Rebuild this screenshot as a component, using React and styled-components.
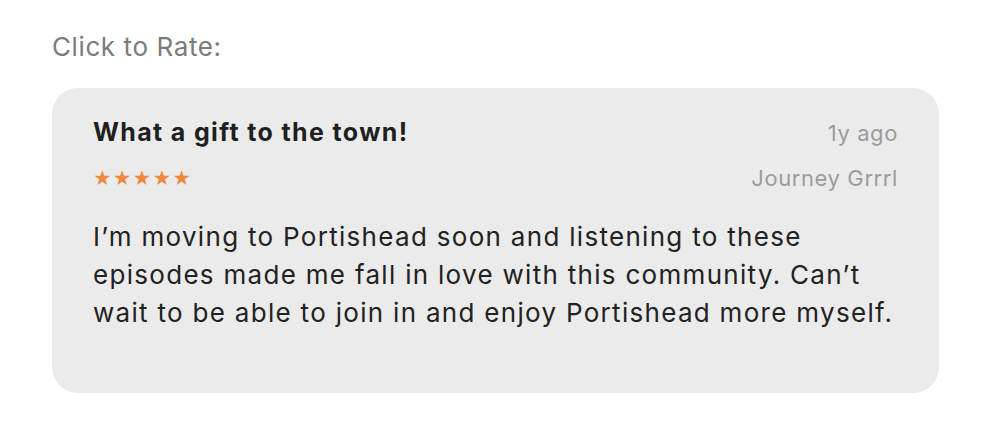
import styled, { createGlobalStyle } from "styled-components";

const GlobalStyle = createGlobalStyle`
  body {
    margin: 0;
    background: #ffffff;
    font-family: Inter, "Noto Sans", sans-serif;
  }
`;

export default function App() {
  return (
    <>
      <GlobalStyle />
      <Page>
        <Label>Click to Rate:</Label>
        <Card>
          <Header>
            <Left>
              <Title>What a gift to the town!</Title>
              <Stars>★★★★★</Stars>
            </Left>
            <Right>
              <Meta>1y ago</Meta>
              <Meta>Journey Grrrl</Meta>
            </Right>
          </Header>
          <Body>
            I’m moving to Portishead soon and listening to these episodes made
            me fall in love with this community. Can’t wait to be able to join
            in and enjoy Portishead more myself.
          </Body>
        </Card>
      </Page>
    </>
  );
}

const Page = styled.div`
  padding: 28px 61px 0 52px;
  display: flex;
  flex-direction: column;
  gap: 22px;
`;

const Label = styled.div`
  font-size: 26px;
  letter-spacing: 0.6px;
  color: #7b7b7b;
  line-height: 38px;
`;

const Card = styled.div`
  background: #ebebeb;
  border-radius: 26px;
  padding: 28px 41px 61px 41px;
  display: flex;
  flex-direction: column;
  gap: 27px;
`;

const Header = styled.div`
  display: flex;
  justify-content: space-between;
`;

const Left = styled.div`
  display: flex;
  flex-direction: column;
  gap: 21px;
`;

const Title = styled.div`
  font-size: 25px;
  font-weight: 700;
  letter-spacing: 1.35px;
  color: #1f1f1f;
  line-height: 32px;
`;

const Stars = styled.div`
  font-size: 18px;
  color: #f0873a;
  letter-spacing: 1px;
  line-height: 20px;
`;

const Right = styled.div`
  display: flex;
  flex-direction: column;
  align-items: flex-end;
  gap: 19px;
  padding-top: 4px;
`;

const Meta = styled.div`
  font-size: 22px;
  letter-spacing: 0.6px;
  color: #9b9b9b;
  line-height: 26px;
`;

const Body = styled.p`
  margin: 0;
  font-size: 26px;
  letter-spacing: 1.3px;
  line-height: 38px;
  color: #222222;
`;
